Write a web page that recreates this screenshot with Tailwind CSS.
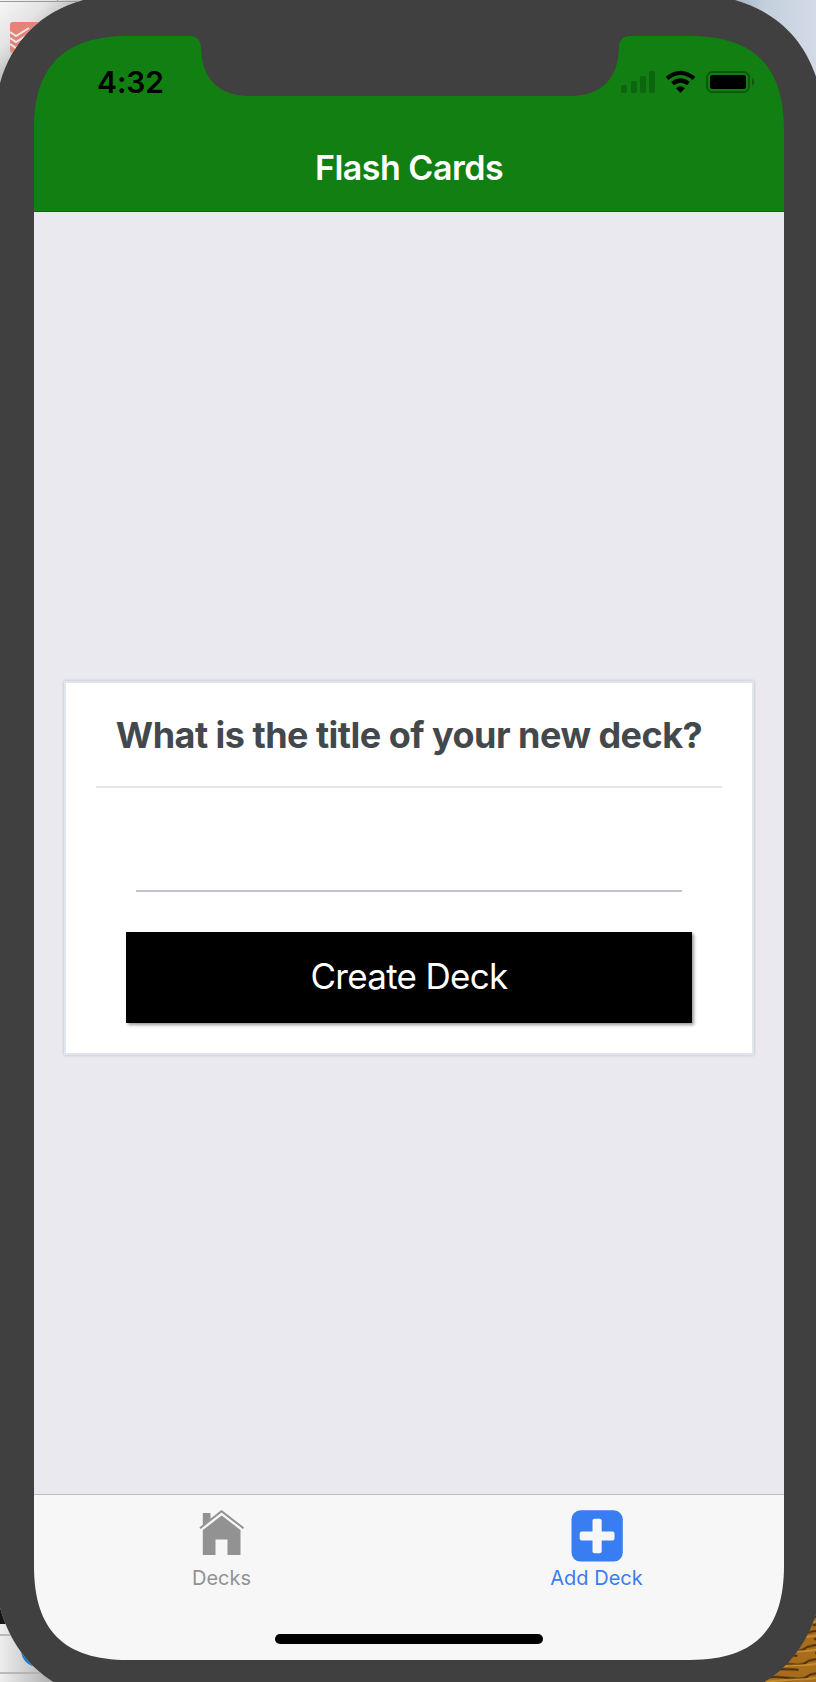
<!DOCTYPE html>
<html lang="en">
<head>
<meta charset="utf-8">
<title>Flash Cards</title>
<script src="https://cdn.jsdelivr.net/npm/@tailwindcss/browser@4"></script>
</head>
<body class="relative w-[816px] h-[1682px] overflow-hidden bg-[#404040] font-['Inter',sans-serif]">
  <main class="ml-[34px] h-[1660px] pt-9 w-[750px] flex flex-col">
    <header class="h-44 shrink-0 bg-[#117f11] border-b border-[#0d660d] flex flex-col">
      <div class="flex h-[92px] items-center justify-between pl-[63px] pr-7">
        <span class="text-[30px] leading-9 font-semibold text-black tracking-[-0.1px]">4:32</span>
        <svg width="136" height="24" viewBox="620 70 136 24">
          <g fill="#0d660d"><rect x="621" y="85" width="6" height="8" rx="1.8"/><rect x="631" y="81" width="6" height="12" rx="1.8"/><rect x="640" y="76" width="6" height="17" rx="1.8"/><rect x="649" y="71" width="6" height="22" rx="1.8"/></g>
          <g fill="none" stroke="#000" stroke-width="4.2"><path d="M667 78.3Q680.500 67.300 694 78.300"/><path d="M672.500 83.500Q680.500 77.500 688.500 83.500"/></g>
          <path d="M676 88.200Q680.500 84.300 685 88.200L680.500 93Z"/>
          <rect x="707" y="72" width="42" height="20" rx="5.500" fill="none" stroke="#0d590d" stroke-width="2"/>
          <rect x="710" y="75" width="36" height="14" rx="2.500"/>
          <path d="M752 78Q757 82 752 86Z" fill="#0d590d"/>
        </svg>
      </div>
      <h1 class="h-[78px] flex items-center justify-center text-white text-[34px] font-semibold tracking-[-0.5px]">Flash Cards</h1>
    </header>
    <section class="flex-1 bg-[#e9e9ef] px-[30px] pt-[469px]">
      <form class="h-[374px] bg-white border-2 border-[#dfe6ed] shadow-[0_0_3px_rgba(0,0,0,0.2)] px-[30px]">
        <h2 class="h-[105px] border-b-2 border-[#e1e8ee] flex items-center justify-center whitespace-nowrap text-[36px] font-bold tracking-[-0.53px] text-[#43484d]">What is the title of your new deck?</h2>
        <input type="text" aria-label="Deck title" class="block mx-10 mt-6 w-[546px] h-20 border-b-2 border-[#bdc6cf] outline-none">
        <button type="button" class="block mx-[30px] mt-10 w-[566px] h-[91px] pb-0.5 bg-black text-white text-[35px] font-normal tracking-[-0.7px] shadow-[2px_2px_3px_rgba(0,0,0,0.4)]">Create Deck</button>
      </form>
    </section>
    <nav class="h-[166px] shrink-0 bg-[#f7f7f7] border-t border-[#bdbdc3] flex flex-col">
      <div class="flex h-[100px] pt-[15px]">
        <a class="flex-1 flex flex-col items-center text-[#929292]">
          <svg width="46" height="52" viewBox="198.5 1510 46 52" fill="currentColor">
            <path d="M202.300 1513H210V1519L202.300 1525Z"/>
            <path d="M199.500 1528.200L221 1511.200L243 1528.200" fill="none" stroke="currentColor" stroke-width="2"/>
            <path d="M221.200 1515.500L240 1530V1555H227V1539.500H215V1555H202.300V1530Z"/>
          </svg>
          <span class="text-[20px] leading-8">Decks</span>
        </a>
        <a class="flex-1 flex flex-col items-center text-[#397df3]">
          <svg width="52" height="52" viewBox="0 0 52 52">
            <rect x=".5" y=".3" width="51.300" height="51.300" rx="9" fill="currentColor"/>
            <rect x="21.500" y="8.700" width="9.200" height="34.600" rx="2" fill="#f7f7f7"/>
            <rect x="8.700" y="21.500" width="34.800" height="9" rx="2" fill="#f7f7f7"/>
          </svg>
          <span class="text-[20px] leading-8">Add Deck</span>
        </a>
      </div>
      <div class="mt-[39px] mx-auto w-[268px] h-[10px] rounded-full bg-black"></div>
    </nav>
  </main>

  <!-- Desktop corners behind the phone, then the bezel with its notch -->
  <svg class="absolute inset-0 pointer-events-none" width="816" height="1682" viewBox="0 0 816 1682">
    <defs>
      <linearGradient id="tl" x1="0" y1="0" x2="1" y2="1"><stop offset="0" stop-color="#f7f7f7"/><stop offset=".25" stop-color="#e3e3e3"/><stop offset=".5" stop-color="#a8a8a8"/></linearGradient>
      <linearGradient id="tr" x1="0" y1="0" x2="1" y2="0"><stop offset="0" stop-color="#94a2b4"/><stop offset=".5" stop-color="#c5d0dd"/><stop offset="1" stop-color="#d2dae6"/></linearGradient>
      <linearGradient id="bl" x1="0" y1="0" x2="1" y2="0"><stop offset="0" stop-color="#eee"/><stop offset="1" stop-color="#999"/></linearGradient>
      <pattern id="wood" width="60" height="14" patternUnits="userSpaceOnUse" patternTransform="rotate(-5)">
        <rect width="60" height="14" fill="#a86d1c"/><path d="M0 3Q20 0 38 4T60 3M8 10Q25 7 50 11" fill="none" stroke="#4b2d0b" stroke-width="2"/><path d="M0 7Q30 5 60 7" fill="none" stroke="#cf9530" stroke-width="1.500"/>
      </pattern>
      <clipPath id="ctl"><path d="M0 0V130H-6C-6 45 45 -6 130 -6V0Z"/></clipPath>
      <clipPath id="ctr"><path d="M816 0V130H824C824 45 773 -6 688 -6V0Z"/></clipPath>
      <clipPath id="cbl"><path d="M0 1682V1560H-6C-6 1645 45 1702 130 1702V1682Z"/></clipPath>
      <clipPath id="cbr"><path d="M816 1682V1560H824C824 1645 773 1702 688 1702V1682Z"/></clipPath>
    </defs>
    <g clip-path="url(#ctl)">
      <rect width="100" height="100" fill="url(#tl)"/>
      <path d="M0 1.500H100M57.500 0V2" stroke="#999" fill="none"/>
      <rect x="10" y="22" width="34" height="31" rx="3" fill="#e38379"/>
      <path d="M10 32L16 36L29 28M10 38L16 42L29 34M10 44L16 48L29 40" fill="none" stroke="#f3e5e3" stroke-width="2"/>
    </g>
    <g clip-path="url(#ctr)"><rect x="716" width="100" height="100" fill="url(#tr)"/></g>
    <g clip-path="url(#cbl)">
      <rect y="1590" width="70" height="92" fill="url(#bl)"/>
      <rect y="1590" width="10" height="34" fill="#151515"/>
      <circle cx="38" cy="1650" r="17" fill="#1b78c8"/>
      <path d="M0 1635H30M0 1673H60" stroke="#aaa" stroke-width="1.500"/>
    </g>
    <g clip-path="url(#cbr)"><rect x="746" y="1590" width="70" height="92" fill="url(#wood)"/></g>
    <g fill="#404040">
      <path d="M33 35H128V36C64 36 34 66 34 130H33Z"/>
      <path d="M785 35H690V36C754 36 784 66 784 130H785Z"/>
      <path d="M33 1661H128V1660C64 1660 34 1630 34 1566H33Z"/>
      <path d="M785 1661H690V1660C754 1660 784 1630 784 1566H785Z"/>
      <path d="M190 35V36C197 36 200.500 40 201 47C201.500 76 216 96 250 96H570C604 96 618.500 76 619 47C619.500 40 623 36 630 36V35Z"/>
    </g>
  </svg>
</body>
</html>
